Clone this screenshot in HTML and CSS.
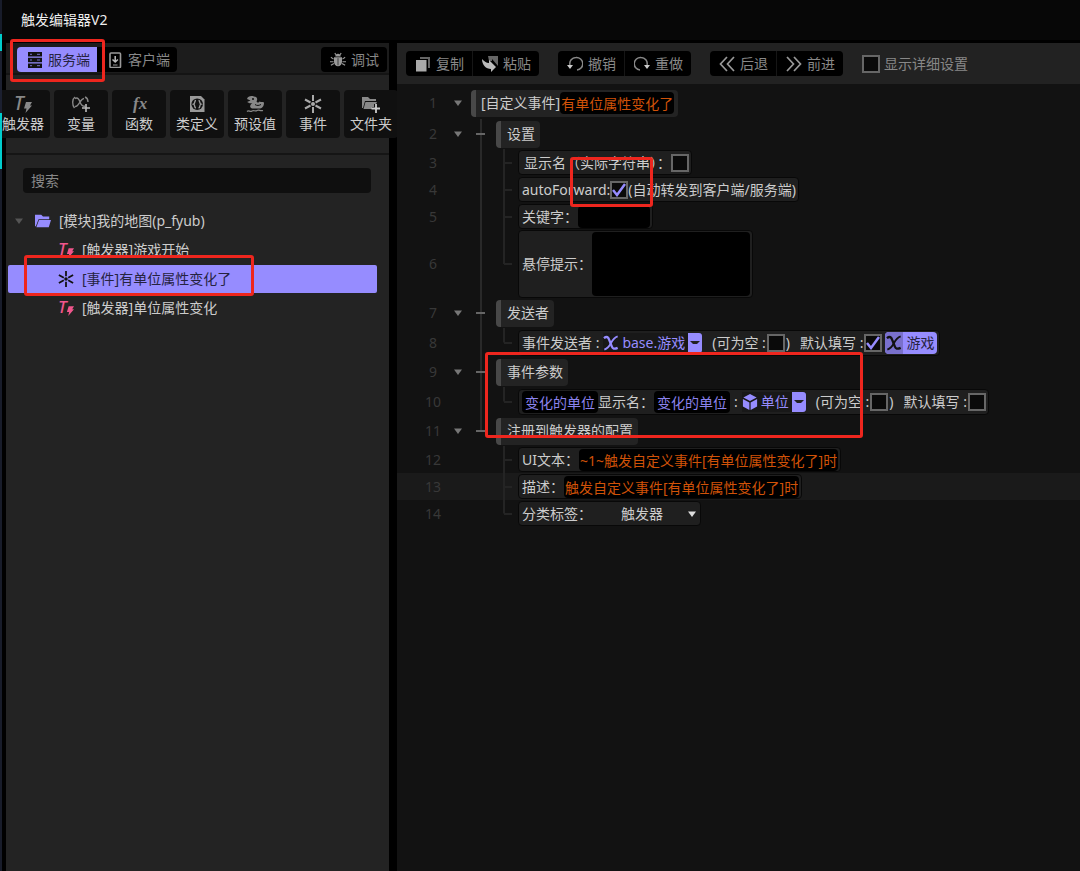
FILE: index.html
```html
<!DOCTYPE html>
<html lang="zh-CN">
<head>
    <meta charset="UTF-8">
    <meta name="viewport" content="width=device-width, initial-scale=1.0">
    <title>触发编辑器V2</title>
    <link rel="stylesheet" href="styles.css">
</head>
<body>
    <svg class="sprite" aria-hidden="true">
        <symbol id="i-trigger" viewBox="0 0 18 18">
            <text x="0" y="15" font-family="Noto Sans" font-size="19" font-style="italic" font-weight="500" fill="currentColor">T</text>
            <path d="M12 7h6l-2 3.500h2L11.500 18l1-4.500H10z" fill="currentColor"/>
        </symbol>
        <symbol id="i-star" viewBox="0 0 18 18">
            <path d="M9 0v6M9 12v6M1 4.500l5.500 3M11.500 10.500l5.500 3M17 4.500l-5.500 3M6.500 10.500l-5.500 3" stroke="currentColor" stroke-width="2" fill="none"/>
            <circle cx="9" cy="9" r="2" fill="currentColor"/>
        </symbol>
        <symbol id="i-x" viewBox="0 0 18 18">
            <path d="M1 3.500C4.500 1 6 2.500 7 5.500l3 7.500c1 2.500 2.500 3.200 6.500 1.500" stroke="currentColor" stroke-width="2.600" fill="none"/>
            <path d="M16.500 1.500C12 3 10.500 6 9 9s-3.500 6-7.500 7.500" stroke="currentColor" stroke-width="2" fill="none"/>
        </symbol>
        <symbol id="i-caret" viewBox="0 0 8 8">
            <path d="M0 1.500h8L4 7z" fill="currentColor"/>
        </symbol>
        <symbol id="i-drop" viewBox="0 0 10 6">
            <path d="M0 1h10L7 4H3z" fill="currentColor"/>
        </symbol>
    </svg>

    <div class="app">
        <header class="titlebar">触发编辑器V2</header>

        <div class="workspace">
            <aside class="sidebar">
                <nav class="tabs">
                    <button type="button" class="tab active">
                        <svg class="icon" viewBox="0 0 16 16"><path d="M1 0h14v4.600H1zM1 5.700h14v4.600H1zM1 11.400h14V16H1z" fill="#111"/><path d="M3 2.300h2M10 2.300h3M3 8h2M10 8h3M3 13.700h2M10 13.700h3" stroke="#7970cc" stroke-width="1"/></svg>
                        服务端
                    </button>
                    <button type="button" class="tab">
                        <svg class="icon" viewBox="0 0 16 16"><rect x="3" y="1" width="10.500" height="14.500" rx="1" fill="none" stroke="#999" stroke-width="1.600"/><path d="M8.200 4v6M5.500 7.500l2.700 2.500 2.700-2.500" fill="none" stroke="#bbb" stroke-width="1.500"/><path d="M6 13h4.500" stroke="#999"/></svg>
                        客户端
                    </button>
                    <button type="button" class="tab debug">
                        <svg class="icon" viewBox="0 0 18 16"><path d="M6 4a3 3 0 0 1 6 0zM4.500 5h9v5a4.500 5 0 0 1-9 0z" fill="#999"/><path d="M6.500 2L5.500 0M11.500 2l1-2M4 7L1 5M4 10H0M4.500 12L1 14M14 7l3-2M14 10h4M13.500 12l3.500 2" stroke="#999" stroke-width="1.300"/><path d="M9 6v8" stroke="#333"/></svg>
                        调试
                    </button>
                </nav>

                <div class="tools">
                    <button type="button" class="tool">
                        <svg viewBox="0 0 18 18"><use href="#i-trigger"/></svg>
                        触发器
                    </button>
                    <button type="button" class="tool">
                        <svg viewBox="0 0 18 18"><path d="M3 3.500c3-1.500 4 1 5 3.500s2 5 5 4M12 3.500C8 4 7 12 3 11.500M3 2C0 4 0 10 2.500 13M13 2c2.500 1 3 3 3 5" fill="none" stroke="currentColor" stroke-width="1.400"/><path d="M14 9v8M10 13h8" stroke="#bbb" stroke-width="1.600"/></svg>
                        变量
                    </button>
                    <button type="button" class="tool">
                        <svg viewBox="0 0 18 18"><text x="3" y="14" font-family="Liberation Serif" font-size="17" font-style="italic" font-weight="bold" fill="currentColor">fx</text></svg>
                        函数
                    </button>
                    <button type="button" class="tool">
                        <svg viewBox="0 0 18 18"><path d="M2 1h11l3.500 3.500V17H2z" fill="#999"/><circle cx="9.200" cy="9.200" r="5.800" fill="#111"/><path d="M8 5.500c-2 0-.5 3-2.500 3.700 2 .7.500 3.700 2.500 3.700M10.500 5.500c2 0 .5 3 2.500 3.700-2 .7-.5 3.700-2.500 3.700" fill="none" stroke="#999" stroke-width="1.400"/></svg>
                        类定义
                    </button>
                    <button type="button" class="tool">
                        <svg viewBox="0 0 18 18"><path d="M1 4c1-3 4-3.500 7-2.500 3 0 4 2.500 2.500 5 1 1.500 2 1.500 3 0 2 1 3 0 4.500 1 0 4-2 6-5 6H6c-3-1-2-4 .5-5.500C4 9 2 7.500 1 7l3.500-1.500z" fill="currentColor"/><circle cx="7" cy="4" r="1" fill="#111"/><path d="M9 9.500c2 1.500 4 1 6 0" fill="none" stroke="#111"/><path d="M1 16.500c2-2 3 1 5-.5s3 1 5-.5 3 1 6 0" fill="none" stroke="currentColor" stroke-width="1.300"/></svg>
                        预设值
                    </button>
                    <button type="button" class="tool star">
                        <svg viewBox="0 0 18 18"><use href="#i-star"/></svg>
                        事件
                    </button>
                    <button type="button" class="tool">
                        <svg viewBox="0 0 18 18"><path d="M0 2h6l2 2h6v2H3L1 13H0zM3.500 7H15l-1 2h-2v3h-2v2H1.500z" fill="currentColor"/><path d="M14 9v9M9.500 13.500h8.500" stroke="#ccc" stroke-width="1.800"/></svg>
                        文件夹
                    </button>
                </div>

                <div class="search">
                    <input type="text" class="search-input" placeholder="搜索" aria-label="搜索">
                </div>

                <ul class="tree">
                    <li class="tree-item">
                        <svg class="caret" viewBox="0 0 8 8"><use href="#i-caret"/></svg>
                        <svg class="tree-icon folder" viewBox="0 0 18 18"><path d="M0 2h7l2 2h7v3H4l-3 8H0zM4.500 8H18l-2.500 8H1.500z" fill="currentColor"/></svg>
                        [模块]我的地图(p_fyub)
                    </li>
                    <li class="tree-item child">
                        <svg class="tree-icon trigger" viewBox="0 0 18 18"><use href="#i-trigger"/></svg>
                        [触发器]游戏开始
                    </li>
                    <li class="tree-item child selected">
                        <svg class="tree-icon" viewBox="0 0 18 18"><use href="#i-star"/></svg>
                        [事件]有单位属性变化了
                    </li>
                    <li class="tree-item child">
                        <svg class="tree-icon trigger" viewBox="0 0 18 18"><use href="#i-trigger"/></svg>
                        [触发器]单位属性变化
                    </li>
                </ul>
            </aside>

            <main class="editor">
                <div class="toolbar">
                    <div class="button-group">
                        <button type="button">
                            <svg class="icon" viewBox="0 0 16 16"><path d="M5 1h10v11h-2V3H5z" fill="#666"/><path d="M1 4h10.500v11.500H1z" fill="#aaa"/></svg>
                            复制
                        </button>
                        <button type="button">
                            <svg class="icon" viewBox="0 0 16 16"><path d="M6 0h10v10l-6-7v2H7z" fill="#666"/><path d="M0 3c2 2 4 4 7 4V4l7 7-5 5v-3C4 13 0 9 0 3z" fill="#bbb"/></svg>
                            粘贴
                        </button>
                    </div>
                    <div class="button-group">
                        <button type="button">
                            <svg class="icon" viewBox="0 0 16 16"><path d="M3 9C2 5 5 1.500 9 1.500a6 6 0 0 1 1 12.500" fill="none" stroke="currentColor" stroke-width="1.500"/><path d="M0 9h6l-3 4z" fill="#ccc"/></svg>
                            撤销
                        </button>
                        <button type="button">
                            <svg class="icon" viewBox="0 0 16 16"><path d="M13 9c1-4-2-7.500-6-7.500A6 6 0 0 0 6 14" fill="none" stroke="currentColor" stroke-width="1.500"/><path d="M10 9h6l-3 4z" fill="#ccc"/></svg>
                            重做
                        </button>
                    </div>
                    <div class="button-group">
                        <button type="button">
                            <svg class="icon" viewBox="0 0 16 16"><path d="M8 1L1.500 8 8 15M15 1L8.500 8l6.500 7" fill="none" stroke="#999" stroke-width="1.700"/></svg>
                            后退
                        </button>
                        <button type="button">
                            <svg class="icon" viewBox="0 0 16 16"><path d="M1 1l6.500 7L1 15M8 1l6.500 7L8 15" fill="none" stroke="#999" stroke-width="1.700"/></svg>
                            前进
                        </button>
                    </div>
                    <label class="detail-toggle"><input type="checkbox" class="check"> 显示详细设置</label>
                </div>

                <div class="code">
                    <div class="row root">
                        <span class="line-no">1</span>
                        <button type="button" class="fold" aria-label="折叠"><svg class="caret" viewBox="0 0 8 8"><use href="#i-caret"/></svg></button>
                        <div class="chip head">[自定义事件]<input type="text" class="field text-value" value="有单位属性变化了" aria-label="自定义事件"></div>
                    </div>

                    <div class="row group">
                        <span class="line-no">2</span>
                        <button type="button" class="fold" aria-label="折叠"><svg class="caret" viewBox="0 0 8 8"><use href="#i-caret"/></svg></button>
                        <span class="trunk branch"></span>
                        <div class="chip head">设置</div>
                    </div>
                    <div class="row">
                        <span class="line-no">3</span><span class="fold"></span>
                        <span class="trunk"></span><span class="twig"></span>
                        <label class="chip display-chip">显示名（实际字符串）：<input type="checkbox" class="check"></label>
                    </div>
                    <div class="row">
                        <span class="line-no">4</span><span class="fold"></span>
                        <span class="trunk"></span><span class="twig"></span>
                        <label class="chip">autoForward:<input type="checkbox" class="check" checked>(自动转发到客户端/服务端)</label>
                    </div>
                    <div class="row">
                        <span class="line-no">5</span><span class="fold"></span>
                        <span class="trunk"></span><span class="twig"></span>
                        <label class="chip">关键字：<input type="text" class="field keyword"></label>
                    </div>
                    <div class="row tall">
                        <span class="line-no">6</span><span class="fold"></span>
                        <span class="trunk"></span><span class="twig last"></span>
                        <label class="chip">悬停提示：<textarea class="field tooltip-text"></textarea></label>
                    </div>

                    <div class="row group">
                        <span class="line-no">7</span>
                        <button type="button" class="fold" aria-label="折叠"><svg class="caret" viewBox="0 0 8 8"><use href="#i-caret"/></svg></button>
                        <span class="trunk branch"></span>
                        <div class="chip head">发送者</div>
                    </div>
                    <div class="row typed">
                        <span class="line-no">8</span><span class="fold"></span>
                        <span class="trunk"></span><span class="twig last"></span>
                        <div class="chip">
                            <span class="caption">事件发送者 :</span>
                            <button type="button" class="type">
                                <svg class="icon" viewBox="0 0 18 18"><use href="#i-x"/></svg>
                                base.游戏
                                <span class="drop"><svg viewBox="0 0 10 6"><use href="#i-drop"/></svg></span>
                            </button>
                            <label class="option">(可为空 :<input type="checkbox" class="check">)</label>
                            <label class="option">默认填写 :<input type="checkbox" class="check" checked></label>
                            <button type="button" class="tag">
                                <span class="tag-icon"><svg class="icon" viewBox="0 0 18 18"><use href="#i-x"/></svg></span>
                                游戏
                            </button>
                        </div>
                    </div>

                    <div class="row group">
                        <span class="line-no">9</span>
                        <button type="button" class="fold" aria-label="折叠"><svg class="caret" viewBox="0 0 8 8"><use href="#i-caret"/></svg></button>
                        <span class="trunk branch"></span>
                        <div class="chip head">事件参数</div>
                    </div>
                    <div class="row typed">
                        <span class="line-no">10</span><span class="fold"></span>
                        <span class="trunk"></span><span class="twig last"></span>
                        <div class="chip">
                            <input type="text" class="field name-value" value="变化的单位" aria-label="参数名">
                            <label class="display-name">显示名：<input type="text" class="field name-value" value="变化的单位"></label>
                            <span class="colon">:</span>
                            <button type="button" class="type">
                                <svg class="icon" viewBox="0 0 18 18"><path d="M9 0l7.500 3.800L9 8 1.500 3.800zM1 5.500l7.300 4V18L1 14zM17 5.500l-7.300 4V18l7.300-4z" fill="currentColor"/></svg>
                                单位
                                <span class="drop"><svg viewBox="0 0 10 6"><use href="#i-drop"/></svg></span>
                            </button>
                            <label class="option">(可为空 :<input type="checkbox" class="check">)</label>
                            <label class="option">默认填写 :<input type="checkbox" class="check"></label>
                        </div>
                    </div>

                    <div class="row group">
                        <span class="line-no">11</span>
                        <button type="button" class="fold" aria-label="折叠"><svg class="caret" viewBox="0 0 8 8"><use href="#i-caret"/></svg></button>
                        <span class="trunk branch last"></span>
                        <div class="chip head">注册到触发器的配置</div>
                    </div>
                    <div class="row">
                        <span class="line-no">12</span><span class="fold"></span>
                        <span class="trunk none"></span><span class="twig"></span>
                        <label class="chip">UI文本：<input type="text" class="field text-value" value="~1~触发自定义事件[有单位属性变化了]时"></label>
                    </div>
                    <div class="row current">
                        <span class="line-no">13</span><span class="fold"></span>
                        <span class="trunk none"></span><span class="twig"></span>
                        <label class="chip">描述：<input type="text" class="field text-value" value="触发自定义事件[有单位属性变化了]时"></label>
                    </div>
                    <div class="row">
                        <span class="line-no">14</span><span class="fold"></span>
                        <span class="trunk none"></span><span class="twig last"></span>
                        <label class="chip">分类标签：
                            <span class="select-wrap">
                                <select class="category"><option>触发器</option></select>
                                <svg class="caret" viewBox="0 0 8 8"><use href="#i-caret"/></svg>
                            </span>
                        </label>
                    </div>
                </div>
            </main>
        </div>

        <div class="mark mark-server"></div>
        <div class="mark mark-event"></div>
        <div class="mark mark-forward"></div>
        <div class="mark mark-params"></div>
    </div>
</body>
</html>
```
FILE: styles.css
```css
* {
    margin: 0;
    padding: 0;
    box-sizing: border-box;
}

body {
    background-color: #000;
    color: #ccc;
    font-family: "Noto Sans", "Noto Sans CJK SC", sans-serif;
    font-size: 14px;
    line-height: 20px;
}

button,
input,
textarea,
select {
    font: inherit;
    color: inherit;
    border: none;
    background: none;
    outline: none;
}

button {
    cursor: pointer;
}

svg {
    flex-shrink: 0;
}

.sprite {
    display: none;
}

.app {
    position: relative;
    min-height: 100vh;
    display: flex;
    flex-direction: column;
    border-left: 2px solid #181c2a;
    border-image: linear-gradient(#181c2a 35px, #0cc 35px, #0cc 52px, #1c2030 52px, #1c2030 114px, #0cc 114px, #0cc 170px, #181c2a 170px) 1;
    border-width: 0 0 0 2px;
    overflow: hidden;
}

.titlebar {
    background-color: #070707;
    color: #eee;
    padding: 10px 19px;
    height: 40px;
}

.workspace {
    flex: 1;
    display: flex;
    gap: 8px;
    padding: 3px 0 0 4px;
}

/* 左侧面板 */
.sidebar {
    flex: 0 0 383px;
    min-width: 0;
    background-color: #232323;
}

.icon {
    width: 16px;
    height: 16px;
}

.tabs {
    display: flex;
    height: 32px;
    padding: 4px 2px 3px 11px;
    background-color: #1c1c1c;
    border-bottom: 2px solid #141414;
}

.tab {
    display: flex;
    align-items: center;
    gap: 5px;
    height: 25px;
    padding: 0 7px 0 10px;
    background-color: #000;
    color: #888;
    border-radius: 0 4px 4px 0;
}

.tab.active {
    background-color: #968cff;
    color: #26233f;
    border-radius: 4px 0 0 4px;
}

.tab.debug {
    margin-left: auto;
    padding: 0 8px 0 9px;
    border-radius: 4px;
}

.tools {
    display: flex;
    justify-content: center;
    gap: 4px;
    padding: 15px 1px 15px 0;
    border-bottom: 2px solid #151515;
}

.tool {
    flex: 0 0 54px;
    height: 48px;
    display: flex;
    flex-direction: column;
    align-items: center;
    justify-content: center;
    gap: 1px;
    background-color: #101010;
    border-radius: 4px;
    color: #ccc;
    white-space: nowrap;
}

.tool svg {
    width: 18px;
    height: 18px;
    color: #888;
    overflow: visible;
}

.tool.star svg {
    color: #aaa;
}

.search {
    padding: 13px 18px 14px 17px;
}

.search-input {
    display: block;
    width: 100%;
    height: 25px;
    padding: 0 8px;
    background-color: #0f0f0f;
    border-radius: 4px;
}

.search-input::placeholder {
    color: #888;
}

.tree {
    list-style: none;
    display: flex;
    flex-direction: column;
    gap: 1px;
    padding: 0 12px 0 2px;
}

.tree-item {
    display: flex;
    align-items: center;
    height: 28px;
    padding-left: 7px;
}

.tree-item.child {
    padding-left: 50px;
}

.tree-item.selected {
    background-color: #968cff;
    color: #26233f;
    border-radius: 2px;
}

.caret {
    width: 8px;
    height: 8px;
    color: #777;
}

.tree-item .caret {
    color: #555;
}

.tree-icon {
    width: 16px;
    height: 16px;
    margin-right: 8px;
}

.tree-item.selected .tree-icon {
    color: #111;
}

.folder {
    color: #968cff;
    margin-left: 12px;
}

.trigger {
    color: #f0568c;
}

/* 右侧编辑区 */
.editor {
    flex: 1;
    min-width: 0;
    background-color: #121212;
    z-index: 1;
}

.toolbar {
    display: flex;
    align-items: center;
    gap: 19px;
    height: 41px;
    padding: 0 9px;
    background-color: #222;
    color: #888;
}

.button-group {
    display: flex;
    background-color: #000;
    border-radius: 4px;
}

.button-group button {
    display: flex;
    align-items: center;
    gap: 5px;
    height: 25px;
    padding: 0 8px 0 9px;
    white-space: nowrap;
}

.button-group button + button {
    border-left: 1px solid #161616;
}

.detail-toggle {
    display: flex;
    align-items: center;
    gap: 4px;
    white-space: nowrap;
}

.check {
    appearance: none;
    flex-shrink: 0;
    width: 18px;
    height: 18px;
    border: 2px solid #666;
    background-color: #0a0a0a;
}

.check:checked {
    background-image: url("data:image/svg+xml,%3Csvg xmlns='http://www.w3.org/2000/svg' viewBox='0 0 14 14'%3E%3Cpath d='M1 7l4 5 8-11' fill='none' stroke='%23968cff' stroke-width='2.500'/%3E%3C/svg%3E");
}

.code {
    padding-top: 3px;
}

.row {
    display: flex;
    align-items: center;
    height: 27px;
    padding-left: 24px;
    white-space: nowrap;
}

.row.root {
    height: 32px;
}

.row.group {
    height: 30px;
}

.row.typed {
    height: 29px;
}

.row.tall {
    height: 68px;
}

.row.current {
    background-color: #1a1a1a;
}

.line-no {
    flex: 0 0 24px;
    text-align: center;
    color: #383838;
}

.fold {
    flex: 0 0 26px;
    display: flex;
    justify-content: center;
}

/* 缩进连线 */
.trunk {
    flex: 0 0 25px;
    align-self: stretch;
    background: linear-gradient(#292929, #292929) 9px 0 / 2px 100% no-repeat;
}

.trunk.branch {
    background:
        linear-gradient(#666, #666) 5px 50% / 9px 2px no-repeat,
        linear-gradient(#292929, #292929) 9px 0 / 2px 100% no-repeat;
}

.trunk.branch.last {
    background:
        linear-gradient(#666, #666) 5px 50% / 9px 2px no-repeat,
        linear-gradient(#292929, #292929) 9px 0 / 2px 50% no-repeat;
}

.trunk.none {
    background: none;
}

.twig {
    flex: 0 0 22px;
    align-self: stretch;
    background:
        linear-gradient(#242424, #242424) 8px 50% / 8px 2px no-repeat,
        linear-gradient(#242424, #242424) 7px 0 / 2px 100% no-repeat;
}

.twig.last {
    background:
        linear-gradient(#242424, #242424) 8px 50% / 8px 2px no-repeat,
        linear-gradient(#242424, #242424) 7px 0 / 2px 50% no-repeat;
}

.chip {
    display: flex;
    align-items: center;
    height: 25px;
    padding: 0 2px 0 3px;
    background-color: #1f1f1f;
    border: 1px solid #080808;
    border-radius: 4px;
}

.chip.head {
    height: 27px;
    padding: 0 5px 0 6px;
    background-color: #232323;
    border: none;
    border-left: 5px solid #484848;
}

.root .chip.head {
    padding: 0 4px 0 5px;
}

.display-chip {
    padding-left: 5px;
}

.tall .chip {
    height: 68px;
}

.typed .chip {
    height: 26px;
}

.field {
    field-sizing: content;
    height: 22px;
    padding: 0 3px;
    background-color: #000;
    border-radius: 4px;
}

.text-value {
    color: #d05208;
    padding: 0 1px;
}

.name-value {
    color: #8c83ee;
}

.keyword {
    field-sizing: fixed;
    width: 72px;
}

.tooltip-text {
    field-sizing: fixed;
    width: 158px;
    height: 64px;
    resize: none;
}

.type {
    display: flex;
    align-items: center;
    gap: 3px;
    margin-left: 4px;
    background-color: #181818;
    color: #968cff;
}

.drop {
    display: flex;
    align-items: center;
    justify-content: center;
    width: 14px;
    height: 20px;
    background-color: #968cff;
    border-radius: 0 3px 3px 0;
    color: #222;
}

.drop svg {
    width: 10px;
    height: 6px;
}

.option {
    display: flex;
    align-items: center;
    gap: 1px;
    margin-left: 10px;
}

.display-name {
    display: flex;
    align-items: center;
}

.colon {
    margin-left: 4px;
}

.tag {
    display: flex;
    align-items: center;
    gap: 3px;
    height: 22px;
    margin-left: 3px;
    padding-right: 3px;
    background-color: #968cff;
    color: #26233f;
    border-radius: 4px;
}

.tag-icon {
    display: flex;
    align-items: center;
    height: 22px;
    padding: 0 1px;
    background-color: #7970cc;
    border-radius: 4px 0 0 4px;
    color: #111;
}

.select-wrap {
    display: flex;
    align-items: center;
    justify-content: space-between;
    width: 106px;
    padding: 0 2px 0 29px;
}

.category {
    appearance: none;
}

.select-wrap .caret {
    color: #ddd;
}

/* 红色标注框 */
.mark {
    position: absolute;
    z-index: 2;
    border: 3px solid #ee261e;
    border-radius: 3px;
    pointer-events: none;
}

.mark-server {
    left: 8px;
    top: 39px;
    width: 95px;
    height: 43px;
}

.mark-event {
    left: 22px;
    top: 255px;
    width: 230px;
    height: 41px;
}

.mark-forward {
    left: 568px;
    top: 157px;
    width: 83px;
    height: 50px;
}

.mark-params {
    left: 483px;
    top: 352px;
    width: 378px;
    height: 86px;
}
```
